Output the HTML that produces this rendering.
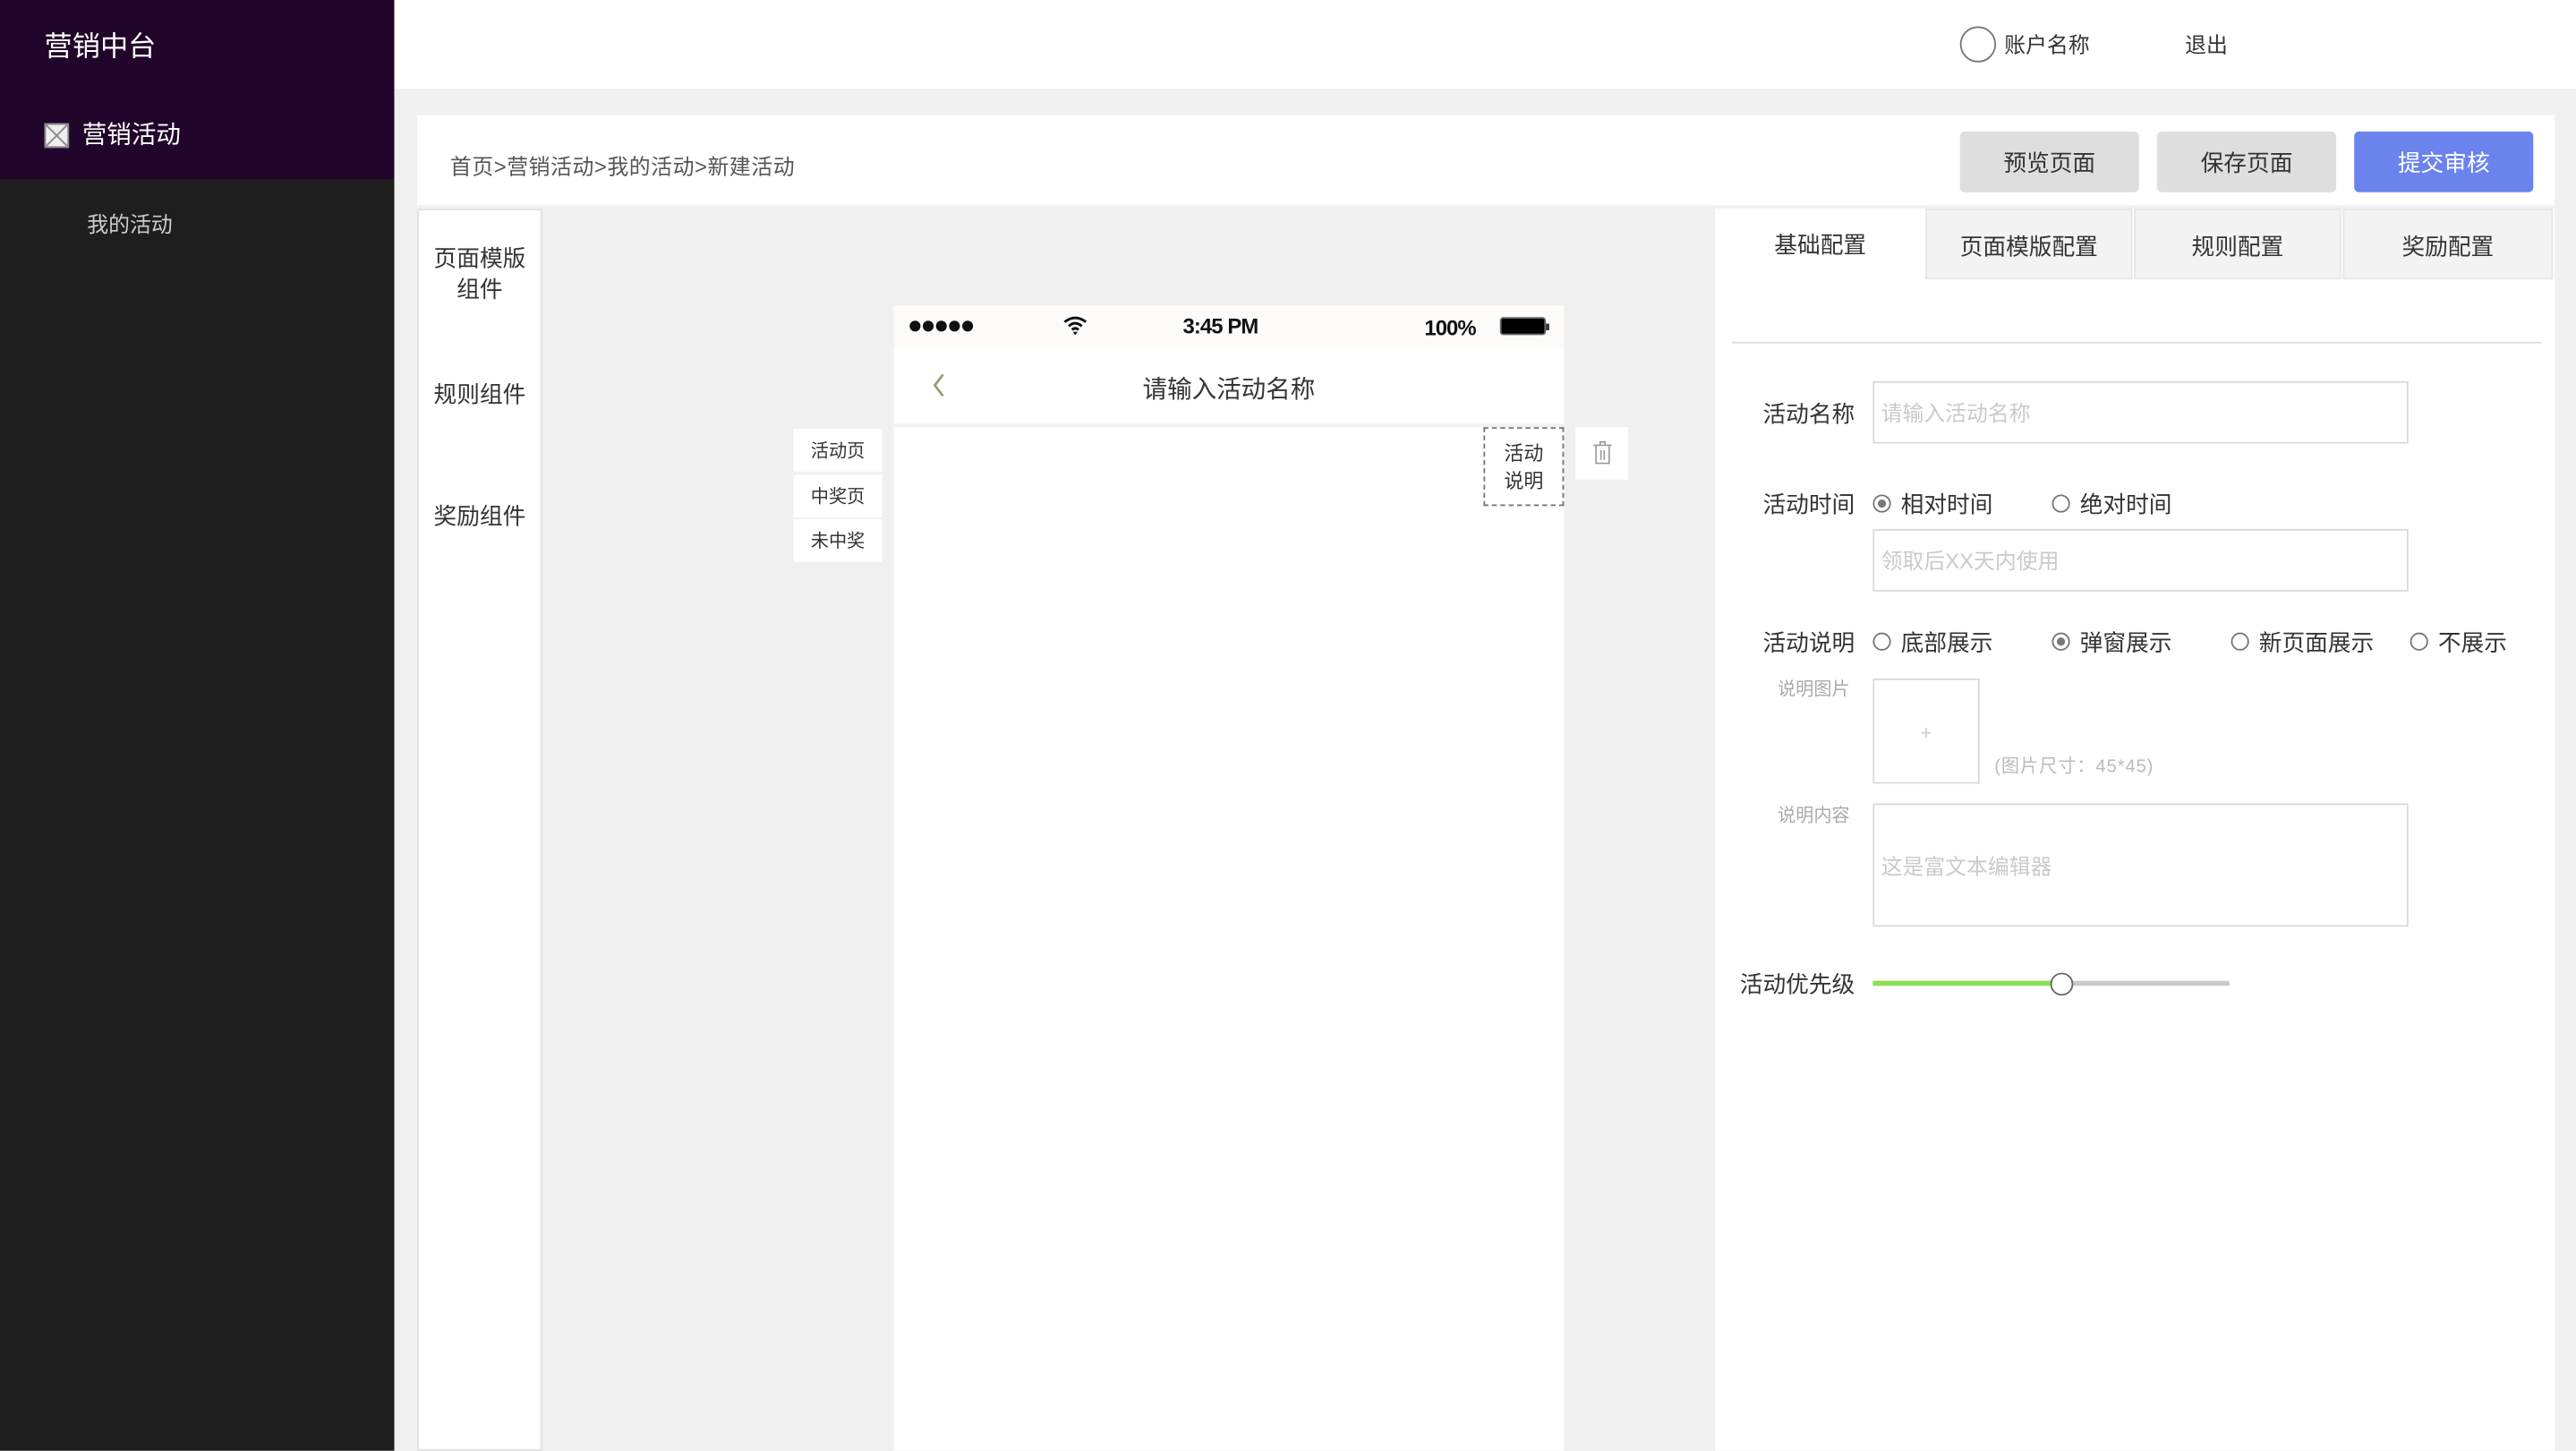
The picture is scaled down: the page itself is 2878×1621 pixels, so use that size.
<!DOCTYPE html>
<html><head><meta charset="utf-8"><style>
html,body{margin:0;padding:0;width:2878px;height:1620px;overflow:hidden;background:#f0f0f0}
#s{position:absolute;left:0;top:0;width:1568px;height:883px;transform:scale(1.83546);transform-origin:0 0;font-family:"Liberation Sans","Noto Sans CJK SC",sans-serif;color:#333}
.a{position:absolute}
.t{position:absolute;white-space:nowrap;line-height:1;margin-top:1px}
.btn{position:absolute;top:80px;width:109px;height:37px;border-radius:3px;background:#dedede;font-size:14px;line-height:39px;text-align:center;color:#333}
.tab{position:absolute;top:127px;height:43px;width:126px;background:#f4f3f3;border:1px solid #e6e6e6;box-sizing:border-box;font-size:14px;line-height:45px;text-align:center}
.inp{position:absolute;left:1140px;width:326px;border:1px solid #dadada;box-sizing:border-box;background:#fff;font-size:13px;color:#cfc8c8;padding-left:4px}
.r{position:absolute;width:11px;height:11px;border:1px solid #777;border-radius:50%;box-sizing:border-box;margin-top:1px}
.r.on::after{content:"";position:absolute;left:2px;top:2px;width:5px;height:5px;border-radius:50%;background:#777}
.lab{font-size:14px;color:#333}
.st{position:absolute;left:483px;width:54px;height:26px;background:#fff;font-size:11px;line-height:28px;text-align:center}
</style></head><body><div id="s">
<div class="a" style="left:0;top:0;width:240px;height:883px;background:#1e1e1e"></div>
<div class="a" style="left:0;top:0;width:240px;height:109px;background:#22052a"></div>
<div class="t" style="left:27px;top:19px;font-size:17px;color:#fff">营销中台</div>
<div class="a" style="left:27px;top:75px;width:15px;height:15px;background:#eee;border:1px solid #888;box-sizing:border-box"><svg width="13" height="13" style="display:block"><path d="M0 0L13 13M13 0L0 13" stroke="#888" stroke-width="1"/></svg></div>
<div class="t" style="left:50px;top:74px;font-size:15px;color:#fff">营销活动</div>
<div class="t" style="left:53px;top:129px;font-size:13px;color:#ccc">我的活动</div>

<div class="a" style="left:240px;top:0;width:1328px;height:54px;background:#fff"></div>
<div class="a" style="left:1193px;top:16px;width:22px;height:22px;border:1px solid #777;border-radius:50%;box-sizing:border-box"></div>
<div class="t" style="left:1220px;top:20px;font-size:13px">账户名称</div>
<div class="t" style="left:1330px;top:20px;font-size:13px">退出</div>

<div class="a" style="left:254px;top:70px;width:1301px;height:55px;background:#fff"></div>
<div class="t" style="left:274px;top:94px;font-size:13px;color:#555;letter-spacing:0.3px">首页&gt;营销活动&gt;我的活动&gt;新建活动</div>
<div class="btn" style="left:1193px">预览页面</div>
<div class="btn" style="left:1313px">保存页面</div>
<div class="btn" style="left:1433px;background:#6b83ec;color:#fff">提交审核</div>

<div class="a" style="left:254px;top:127px;width:76px;height:756px;background:#fff;border:1px solid #e0e0e0;box-sizing:border-box"></div>
<div class="t" style="left:254px;width:76px;text-align:center;top:147px;font-size:14px;line-height:19px;white-space:normal">页面模版<br>组件</div>
<div class="t" style="left:254px;width:76px;text-align:center;top:232px;font-size:14px">规则组件</div>
<div class="t" style="left:254px;width:76px;text-align:center;top:306px;font-size:14px">奖励组件</div>

<div class="a" style="left:544px;top:186px;width:408px;height:697px;background:#fff"></div>
<div class="a" style="left:544px;top:186px;width:408px;height:26px;background:#fcfbfa"></div>
<svg class="a" style="left:553px;top:194px" width="42" height="9"><g fill="#111"><circle cx="4" cy="4.5" r="3.3"/><circle cx="12" cy="4.5" r="3.3"/><circle cx="20" cy="4.5" r="3.3"/><circle cx="28" cy="4.5" r="3.3"/><circle cx="36" cy="4.5" r="3.3"/></g></svg>
<svg class="a" style="left:647px;top:192px" width="15" height="12" viewBox="0 0 15 12"><path d="M1 4Q7.5-1 14 4M3.5 6.5Q7.5 3 11.5 6.5M5.5 8.7Q7.5 7 9.5 8.7" stroke="#111" stroke-width="1.6" fill="none"/><path d="M6 10L7.5 12L9 10Z" fill="#111"/></svg>
<div class="t" style="left:720px;top:191px;font-size:13px;font-weight:bold;color:#111;letter-spacing:-0.5px">3:45 PM</div>
<div class="t" style="left:867px;top:192px;font-size:13px;font-weight:bold;color:#111;letter-spacing:-0.5px">100%</div>
<div class="a" style="left:913px;top:193px;width:28px;height:11px;background:#000;border:1px solid #666;border-radius:2px;box-sizing:border-box"></div>
<div class="a" style="left:941px;top:197px;width:2px;height:4px;background:#333"></div>
<svg class="a" style="left:567px;top:227px" width="9" height="16"><path d="M7 1L2 7.5L7 14" stroke="#a09870" stroke-width="1.5" fill="none"/></svg>
<div class="t" style="left:544px;width:408px;text-align:center;top:229px;font-size:15px">请输入活动名称</div>
<div class="a" style="left:544px;top:258px;width:408px;height:2px;background:#f0f0f0"></div>
<div class="st" style="top:261px">活动页</div>
<div class="st" style="top:289px">中奖页</div>
<div class="st" style="top:316px">未中奖</div>
<div class="a" style="left:903px;top:260px;width:49px;height:48px;border:1px dashed #777;box-sizing:border-box;font-size:12px;line-height:17px;text-align:center;padding-top:7px">活动<br>说明</div>
<div class="a" style="left:959px;top:260px;width:32px;height:32px;background:#fff"></div>
<svg class="a" style="left:969px;top:268px" width="13" height="15"><path d="M1 3H12M5 3V1H8V3M2.5 3V14H10.5V3M5.5 6V12M7.5 6V12" stroke="#999" fill="none" stroke-width="0.9"/></svg>

<div class="a" style="left:1044px;top:127px;width:511px;height:756px;background:#fff"></div>
<div class="tab" style="left:1044px;width:128px;background:#fff;border:none">基础配置</div>
<div class="tab" style="left:1172px">页面模版配置</div>
<div class="tab" style="left:1299px">规则配置</div>
<div class="tab" style="left:1426px;width:128px">奖励配置</div>
<div class="a" style="left:1054px;top:208px;width:493px;height:1px;background:#ddd"></div>

<div class="t lab" style="left:1073px;top:244px">活动名称</div>
<div class="inp" style="top:232px;height:38px;line-height:38px">请输入活动名称</div>
<div class="t lab" style="left:1073px;top:299px">活动时间</div>
<div class="r on" style="left:1140px;top:300px"></div><div class="t lab" style="left:1157px;top:299px">相对时间</div>
<div class="r" style="left:1249px;top:300px"></div><div class="t lab" style="left:1266px;top:299px">绝对时间</div>
<div class="inp" style="top:322px;height:38px;line-height:38px">领取后XX天内使用</div>
<div class="t lab" style="left:1073px;top:383px">活动说明</div>
<div class="r" style="left:1140px;top:384px"></div><div class="t lab" style="left:1157px;top:383px">底部展示</div>
<div class="r on" style="left:1249px;top:384px"></div><div class="t lab" style="left:1266px;top:383px">弹窗展示</div>
<div class="r" style="left:1358px;top:384px"></div><div class="t lab" style="left:1375px;top:383px">新页面展示</div>
<div class="r" style="left:1467px;top:384px"></div><div class="t lab" style="left:1484px;top:383px">不展示</div>
<div class="t" style="left:1082px;top:414px;font-size:11px;color:#aaa">说明图片</div>
<div class="a" style="left:1140px;top:413px;width:65px;height:64px;border:1px solid #dadada;box-sizing:border-box;text-align:center;line-height:64px;font-size:12px;color:#ccc">+</div>
<div class="t" style="left:1214px;top:461px;font-size:11px;color:#bbb;letter-spacing:0.5px">(图片尺寸：45*45)</div>
<div class="t" style="left:1082px;top:491px;font-size:11px;color:#aaa">说明内容</div>
<div class="inp" style="top:489px;height:75px;line-height:75px">这是富文本编辑器</div>
<div class="t lab" style="left:1059px;top:591px">活动优先级</div>
<div class="a" style="left:1140px;top:597px;width:217px;height:3px;background:#ccc8c8"></div>
<div class="a" style="left:1140px;top:597px;width:115px;height:3px;background:#8de04e"></div>
<div class="a" style="left:1248px;top:592px;width:14px;height:14px;border:1px solid #666;border-radius:50%;background:#fff;box-sizing:border-box"></div>
</div></body></html>
